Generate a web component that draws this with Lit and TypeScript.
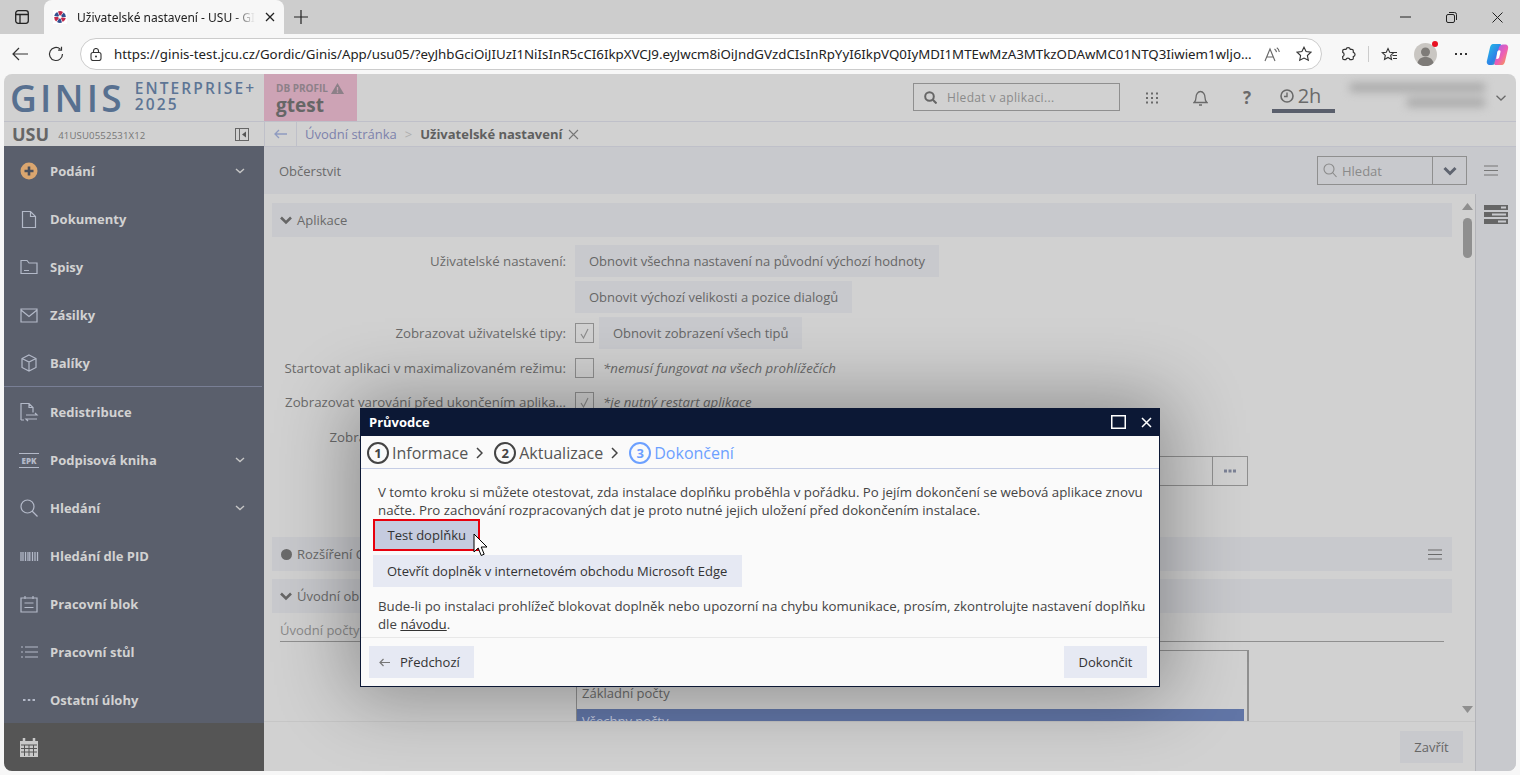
import { LitElement, html, css, svg } from "lit";
import { customElement } from "lit/decorators.js";

const s = (w: number, h: number, body: unknown, cls = "") =>
  html`<svg class=${cls} width=${w} height=${h} viewBox="0 0 ${w} ${h}" fill="none" stroke="currentColor" stroke-width="1.2">${body}</svg>`;

const chevSmall = s(10, 6, svg`<path d="M1 1l4 3.5L9 1" stroke-width="1.4"/>`);
const chevBold = s(14, 10, svg`<path d="M1.5 2l5.5 5.5L12.5 2" stroke-width="3"/>`);

const navIcons: Record<string, unknown> = {
  plus: s(18, 18, svg`<circle cx="9" cy="9" r="8.5" fill="#dba66f" stroke="none"/><path d="M9 4.5v9M4.5 9h9" stroke="#4a4f5c" stroke-width="2.6"/>`),
  doc: s(16, 18, svg`<path d="M1.5 1.5h8l5 5v11h-13zM9.5 1.5v5h5"/>`),
  folder: s(18, 16, svg`<path d="M1 1.5h6l2 2.5h8v10.5H1zM4 11.5h5"/>`),
  mail: s(18, 15, svg`<path d="M1 1h16v13H1zM1 2l8 6.5L17 2"/>`),
  box: s(18, 18, svg`<path d="M9 1l7 3.5v9L9 17l-7-3.500v-9zM2 4.500l7 3.500 7-3.500M9 8v9"/>`),
  redist: s(20, 20, svg`<path d="M2 18V1.500h8l4 4v5M10 1.500v4h4M2 18h3M7 13h11l-2-2M18 17H7l2 2"/>`),
  epk: html`<span class="epk">EPK</span>`,
  search: s(18, 18, svg`<circle cx="7.500" cy="7.500" r="6.500"/><path d="M12 12l5.500 5.500"/>`),
  pid: s(19, 9, svg`<path d="M1 0v9M3 0v9M5.500 0v9M8 0v9M9.800 0v9M12.500 0v9M15 0v9M17.500 0v9" stroke-width="1.300"/>`),
  cal: s(18, 18, svg`<path d="M1 3h16v14H1zM5 1v3M13 1v3M4.500 8h9M4.500 12.500h9"/>`),
  list: s(18, 12, svg`<path d="M5 1h13M5 6h13M5 11h13M1 1h2M1 6h2M1 11h2"/>`),
  dots: s(14, 4, svg`<path d="M1 2h2.500M5.800 2h2.500M10.500 2h2.500" stroke-width="2"/>`),
};

const nav: [string, string, boolean][] = [
  ["plus", "Podání", true],
  ["doc", "Dokumenty", false],
  ["folder", "Spisy", false],
  ["mail", "Zásilky", false],
  ["box", "Balíky", false],
];
const nav2: [string, string, boolean][] = [
  ["redist", "Redistribuce", false],
  ["epk", "Podpisová kniha", true],
  ["search", "Hledání", true],
  ["pid", "Hledání dle PID", false],
  ["cal", "Pracovní blok", false],
  ["list", "Pracovní stůl", false],
  ["dots", "Ostatní úlohy", false],
];

const URL_TEXT =
  "https://ginis-test.jcu.cz/Gordic/Ginis/App/usu05/?eyJhbGciOiJIUzI1NiIsInR5cCI6IkpXVCJ9.eyJwcm8iOiJndGVzdCIsInRpYyI6IkpVQ0IyMDI1MTEwMzA3MTkzODAwMC01NTQ3Iiwiem1wljo...";

const blades = [0, 60, 120, 180, 240, 300];

@customElement("app-root")
export class AppRoot extends LitElement {
  static styles = css`
    :host { display: block; width: 1520px; height: 775px; position: relative; overflow: hidden; background: #f7f7f7; font-family: "Open Sans", "Noto Sans", sans-serif; font-size: 13px; color: #6a6a6a; }
    * { box-sizing: border-box; }
    svg { display: block; flex: none; }

    .tabbar { height: 34px; background: #cdcdcd; display: flex; align-items: flex-end; color: #222; }
    .tabside { width: 44px; height: 34px; display: flex; align-items: center; justify-content: center; }
    .tab { width: 240px; height: 34px; background: #f7f7f7; border-radius: 8px 8px 0 0; display: flex; align-items: center; padding: 0 9px; font-family: "Noto Sans", sans-serif; font-size: 12px; color: #222; }
    .tab .title { flex: 1; margin-left: 10px; white-space: nowrap; overflow: hidden; -webkit-mask-image: linear-gradient(90deg, #000 88%, transparent); mask-image: linear-gradient(90deg, #000 88%, transparent); }
    .tab .x { margin: 0 0 0 10px; }
    .newtab { width: 34px; height: 34px; display: flex; align-items: center; justify-content: center; }
    .tabspace { flex: 1; }
    .wc { width: 46px; height: 34px; display: flex; align-items: center; justify-content: center; }

    .toolbar { height: 40px; background: #f7f7f7; display: flex; align-items: center; color: #333; padding-left: 2px; }
    .tbtn { width: 36px; height: 36px; display: flex; align-items: center; justify-content: center; flex: none; }
    .urlbar { width: 1242px; height: 32px; margin-left: 6px; background: #fff; border: 1px solid #ccc; border-radius: 16px; display: flex; align-items: center; padding-left: 9px; }
    .url { width: 1137px; margin-left: 12px; margin-right: 5px; flex: none; font-family: "Noto Sans", sans-serif; font-size: 13.3px; color: #222; white-space: nowrap; overflow: hidden; }
    .urlicon { width: 32px; display: flex; justify-content: center; flex: none; }
    .tbar-gap { width: 8px; flex: none; }
    .vline { width: 1px; height: 16px; background: #ccc; margin: 0 2px; flex: none; }
    .profile { position: relative; width: 36px; height: 36px; display: flex; align-items: center; justify-content: center; flex: none; }
    .reddot { position: absolute; left: 25px; top: 5px; width: 6px; height: 6px; border-radius: 50%; background: #e81123; }

    .frame { margin: 0 4px; height: 697px; border-radius: 8px; overflow: hidden; background: #d1d1d1; display: flex; flex-direction: column; }
    .head { height: 48px; flex: none; display: flex; border-bottom: 1px solid #bfc0c9; }
    .logo { width: 260px; flex: none; display: flex; align-items: center; padding: 0 0 0 6px; color: #577090; }
    .ginis { flex: none; font-size: 37px; line-height: 40px; font-weight: 600; letter-spacing: 3.2px; }
    .edition { flex: none; margin-left: 10px; margin-top: -3px; font-size: 15.5px; line-height: 16px; font-weight: 600; letter-spacing: 2.1px; color: #5d7595; white-space: nowrap; }
    .profilebox { width: 93px; flex: none; background: #cda3b5; padding: 7px 0 0 12px; }
    .profilelabel { display: flex; align-items: center; gap: 3px; font-size: 10px; line-height: 14px; font-weight: 700; color: #8c8088; }
    .gtest { font-size: 19px; line-height: 20px; font-weight: 700; color: #666; }
    .headspace { flex: 1; }
    .hsearch { width: 207px; height: 28px; margin-top: 9px; border: 1px solid #8f8f8f; display: flex; align-items: center; padding-left: 10px; gap: 10px; color: #8a8a8a; font-size: 12px; letter-spacing: .35px; }
    .hcell { height: 47px; display: flex; align-items: center; justify-content: center; color: #6a6a6a; flex: none; }
    .time { font-size: 20px; gap: 4px; border-bottom: 4px solid #5a5f6c; height: 39px; padding: 8px 6px 0 0; }
    .blur { width: 150px; padding: 9px 0 0 10px; display: flex; flex-direction: column; align-items: flex-end; gap: 6px; filter: blur(4px); }
    .blur i { display: block; height: 9px; background: #a9a9a9; }

    .columns { flex: 1; display: flex; min-height: 0; }
    .side { width: 260px; flex: none; display: flex; flex-direction: column; }
    .usu { height: 24px; flex: none; display: flex; align-items: center; padding: 0 15px 0 9px; }
    .usu b { font-size: 18px; font-weight: 700; color: #666; margin-left: -1px; }
    .usu small { font-size: 9.600px; margin-left: 9px; margin-top: 3px; flex: 1; color: #777; letter-spacing: .15px; }
    .nav { flex: 1; min-height: 0; background: #5a5f6c; overflow: hidden; padding-top: 1px; }
    .sep { height: 1px; background: #797f95; margin-right: 2px; margin-top: -1px; }
    .item { height: 48px; display: flex; align-items: center; padding: 0 19px 0 4px; color: #d2d2d2; font-weight: 700; font-size: 13px; }
    .item .ic { width: 42px; display: flex; justify-content: center; color: #b3b9c8; flex: none; }
    .item .lbl { flex: 1; }
    .item .ch { color: #c6c6c6; }
    .epk { display: block; width: 20px; border-top: 1px solid #b3b9c8; border-bottom: 1px solid #b3b9c8; font-size: 8px; line-height: 11px; text-align: center; font-weight: 800; color: #b3b9c8; padding: 1px 0; }
    .sidefoot { height: 48px; flex: none; background: #555; display: flex; align-items: center; padding-left: 16px; }

    .main { flex: 1; min-width: 0; display: flex; flex-direction: column; }
    .crumb { height: 25px; flex: none; display: flex; align-items: center; border-bottom: 1px solid #bfc0c9; border-left: 1px solid #bfc0c9; }
    .back { width: 32px; height: 24px; border-right: 1px solid #bfc0c9; display: flex; align-items: center; justify-content: center; color: #8f9bc0; }
    .crumb .c1 { margin-left: 8px; color: #7d82ac; }
    .crumb .sepc { margin: 0 8px; color: #aeaeae; }
    .crumb b { color: #5f5f5f; font-weight: 700; }
    .crumb .cx { margin-left: 6px; color: #777; }
    .tools { height: 47px; flex: none; background: #c8c9cd; display: flex; align-items: center; padding: 0 18px 0 15px; }
    .tools .ref { flex: 1; }
    .fsearch { width: 150px; height: 29px; border: 1px solid #8f8f8f; display: flex; align-items: center; color: #8a8a8a; }
    .fsearch .in { flex: 1; display: flex; align-items: center; gap: 5px; padding-left: 5px; height: 100%; }
    .fsearch .dd { width: 34px; height: 100%; border-left: 1px solid #8f8f8f; display: flex; align-items: center; justify-content: center; color: #5f6470; }
    .burger { margin-left: 17px; color: #777; }

    .body { flex: 1; min-height: 0; display: flex; }
    .left { flex: 1; min-width: 0; display: flex; flex-direction: column; }
    .scrollrow { flex: 1; min-height: 0; display: flex; overflow: hidden; }
    .content { flex: 1; min-width: 0; padding: 9px 8px 0; overflow: hidden; }
    .scroll { width: 15px; flex: none; display: flex; flex-direction: column; align-items: center; padding-top: 9px; color: #8f8f8f; }
    .thumb { width: 9px; height: 40px; border-radius: 5px; background: #8f8f8f; margin-top: 8px; }
    .scroll .sp { flex: 1; }
    .scroll .down { margin-bottom: 8px; }
    .bar { height: 34px; background: #c8c9cd; display: flex; align-items: center; padding: 0 10px 0 8px; gap: 5px; color: #6a6a6a; }
    .bar .t { flex: 1; white-space: nowrap; }
    .bar .ci { width: 12px; display: flex; justify-content: center; color: #666; }
    .dot { width: 11px; height: 11px; border-radius: 50%; background: #6a6a6a; flex: none; }
    .form { display: grid; grid-template-columns: 294px 1fr; column-gap: 9px; row-gap: 4px; padding-top: 8px; grid-template-rows: 32px 32px 32px 30px 30px 32px 30px; }
    .lab { display: flex; align-items: center; justify-content: flex-end; white-space: nowrap; overflow: hidden; font-size: 13.27px; }
    .ctl { display: flex; align-items: center; gap: 5px; min-width: 0; }
    .btn { height: 32px; display: inline-flex; align-items: center; padding: 0 14px; background: #c8c9cd; white-space: nowrap; color: #666; }
    .cb { width: 19px; height: 20px; border: 1px solid #8f8f8f; display: flex; align-items: center; justify-content: center; color: #8a8a8a; flex: none; }
    .note { font-style: italic; font-size: 13.27px; margin-left: 4px; color: #6a6a6a; }
    .inputrow { margin-top: -2px; height: 30px; border: 1px solid #8f8f8f; display: flex; justify-content: flex-end; width: 673px; }
    .inputrow .more { width: 35px; border-left: 1px solid #8f8f8f; display: flex; align-items: center; justify-content: center; color: #7c8296; }
    .mt1 { margin-top: 50px; }
    .mt2 { margin-top: 8px; }
    .field { margin: 8px 8px 0; height: 21px; border-bottom: 1px solid #8f8f8f; color: #8a8a8a; line-height: 18px; }
    .listbox { margin: 8px 0 0 304px; width: 673px; height: 90px; border: 1px solid #8f8f8f; border-right-width: 2px; border-bottom: 0; padding: 30px 3px 0 0; }
    .listbox div { height: 24px; line-height: 24px; padding-left: 5px; }
    .listbox .sel { background: #6175a6; color: #c6cde0; height: 26px; margin-top: 4px; }
    .foot { height: 50px; flex: none; border-top: 1px solid #c6c6c6; display: flex; align-items: center; justify-content: flex-end; padding-right: 12px; }
    .foot .btn { width: 63px; justify-content: center; padding: 0; }
    .rpanel { width: 41px; flex: none; background: #c8c9cd; border-left: 1px solid #b4b5ba; padding: 11px 0 0 8px; }

    .modal { position: absolute; left: 360px; top: 408px; width: 800px; height: 279px; background: #fafafa; border: 1px solid #0c1835; border-top: 0; box-shadow: 0 0 70px 10px rgba(0,0,0,.32); display: flex; flex-direction: column; color: #444; }
    .mtitle { height: 28px; flex: none; margin: 0 -1px; background: #0c1835; color: #fff; display: flex; align-items: center; padding: 0 0 0 9px; font-weight: 700; }
    .mtitle .t { flex: 1; }
    .mtitle .wb { width: 28px; display: flex; justify-content: center; }
    .steps { height: 33px; flex: none; border-bottom: 1px solid #c5cde5; display: flex; align-items: center; padding: 2px 0 0 6px; font-size: 16px; color: #555; }
    .num { width: 22px; height: 22px; border: 2px solid #444; border-radius: 50%; display: flex; align-items: center; justify-content: center; font-size: 13px; font-weight: 700; line-height: 1; margin-right: 3px; color: #444; }
    .chev { margin: 0 11px 0 8px; color: #444; }
    .cur { color: #6ca0ff; }
    .cur .num { border-color: #6ca0ff; color: #6ca0ff; }
    .stepgroup { display: flex; align-items: center; }
    .mbody { flex: 1; min-height: 0; padding: 14px 0 0 12px; line-height: 18px; }
    .mbody p { margin: 0 0 0 5px; white-space: nowrap; font-size: 13.27px; }
    .mbtn { display: flex; width: max-content; height: 32px; align-items: center; padding: 0 14px; background: #e6e9f3; color: #333; }
    .mbtn.hot { background: #c5cbdf; border: 2px solid #e8000d; padding: 0 12.500px; }
    .mbody .mbtn + .mbtn { margin-top: 4px; padding-right: 14.500px; }
    .mbody .after { margin-top: 10px; }
    .mbody a { color: #333; text-decoration: underline; }
    .mfoot { height: 49px; flex: none; border-top: 1px solid #e8e8e8; display: flex; justify-content: space-between; align-items: center; padding: 0 12px 0 8px; }
    .mfoot .arrow { margin-right: 10px; color: #777; }
    .mfoot .mbtn { padding: 0 14px 0 10px; }
    .mfoot .mbtn.r { padding: 0; width: 83px; justify-content: center; }
    .pointer { position: absolute; left: 473px; top: 533px; }
  `;

  render() {
    const item = ([k, l, c]: [string, string, boolean]) => html`
      <div class="item"><span class="ic">${navIcons[k]}</span><span class="lbl">${l}</span>${c ? html`<span class="ch">${chevSmall}</span>` : ""}</div>`;
    return html`
      <div class="tabbar">
        <div class="tabside">${s(14, 14, svg`<rect x=".7" y=".7" width="12.600" height="12.600" rx="2.500" stroke-width="1.300"/><path d="M1 4.500h12M5 4.500V13" stroke-width="1.300"/>`)}</div>
        <div class="tab">
          <svg width="14" height="14" viewBox="0 0 14 14"><rect width="14" height="14" fill="#fff"/>${blades.map((a, i) => svg`<path d="M7 7L5 1.500Q7.500 .5 10 2z" fill=${i % 2 ? "#33508f" : "#c22a4c"} transform="rotate(${a} 7 7)"/>`)}<circle cx="7" cy="7" r="1.800" fill="#fff"/></svg>
          <span class="title">Uživatelské nastavení - USU - GINIS</span>
          <span class="x">${s(10, 10, svg`<path d="M1 1l8 8M9 1l-8 8" stroke-width="1.300"/>`)}</span>
        </div>
        <div class="newtab">${s(14, 14, svg`<path d="M7 0v14M0 7h14" stroke-width="1.200"/>`)}</div>
        <div class="tabspace"></div>
        <div class="wc">${s(11, 2, svg`<path d="M0 1h11" stroke-width="1"/>`)}</div>
        <div class="wc">${s(11, 11, svg`<rect x=".5" y="2.500" width="8" height="8" rx="1.500" stroke-width="1"/><path d="M3 .5h5.500a2 2 0 0 1 2 2V8" stroke-width="1"/>`)}</div>
        <div class="wc">${s(11, 11, svg`<path d="M.5.5l10 10M10.500.5l-10 10" stroke-width="1"/>`)}</div>
      </div>

      <div class="toolbar">
        <div class="tbtn">${s(16, 14, svg`<path d="M16 7H1M7 1L1 7l6 6" stroke-width="1.200"/>`)}</div>
        <div class="tbtn">${s(16, 16, svg`<path d="M14.500 8A6.500 6.500 0 1 1 12.300 3.100M13.500 .8v3.400h-3.400" stroke-width="1.200"/>`)}</div>
        <div class="urlbar">
          <span>${s(12, 13, svg`<rect x="1" y="4.500" width="10" height="8" rx="2" stroke-width="1.100"/><path d="M3.500 4.500V3a2.500 2.500 0 0 1 5 0v1.500" stroke-width="1.100"/><circle cx="6" cy="8.500" r="1" fill="currentColor" stroke="none"/>`)}</span>
          <span class="url">${URL_TEXT}</span>
          <span class="urlicon">${s(17, 15, svg`<path d="M1 14L6 2l5 12M2.800 10h6.400M10.500 2c1.200.8 1.800 1.800 2 3.200M12.800 .8c1.500 1 2.300 2.500 2.500 4.200" stroke-width="1.100" stroke="#666"/>`)}</span>
          <span class="urlicon">${s(16, 16, svg`<path d="M8 1.200l2.100 4.400 4.800.6-3.500 3.300.9 4.800L8 12l-4.300 2.300.9-4.800L1.100 6.200l4.800-.6z" stroke-width="1.100"/>`)}</span>
        </div>
        <div class="tbar-gap"></div>
        <div class="tbtn">${s(16, 16, svg`<path d="M6 3.300a2.200 2.200 0 0 1 4.300 0h1.500a1.500 1.500 0 0 1 1.500 1.500v1.500a2.200 2.200 0 0 1 0 4.300v1.600a1.500 1.500 0 0 1-1.500 1.500H10a2.200 2.200 0 0 0-4.200 0H4.200a1.500 1.500 0 0 1-1.500-1.500v-1.700a2.200 2.200 0 0 0 0-4.100V4.800a1.500 1.500 0 0 1 1.500-1.500z" stroke-width="1.200"/>`)}</div>
        <div class="vline"></div>
        <div class="tbtn">${s(17, 15, svg`<path d="M7 1.500l1.700 3.700 4 .5-3 2.700.8 4L7 10.500l-3.500 1.900.8-4-3-2.700 4-.5zM11.500 8.500H16M12 11.500h4M11 5.500h5" stroke-width="1.100"/>`)}</div>
        <div class="profile">
          <svg width="23" height="23" viewBox="0 0 23 23"><circle cx="11.500" cy="11.500" r="11.500" fill="#c9c6c2"/><circle cx="11.500" cy="9" r="4.500" fill="#7e7b78"/><path d="M3.500 20c1-4.500 4.500-6 8-6s7 1.500 8 6a11.500 11.500 0 0 1-16 0z" fill="#7e7b78"/></svg>
          <span class="reddot"></span>
        </div>
        <div class="tbtn">${s(14, 4, svg`<path d="M1 2h2M6 2h2M11 2h2" stroke-width="2"/>`)}</div>
        <div class="tbtn">
          <svg width="23" height="23" viewBox="0 0 23 23">
            <defs>
              <linearGradient id="cp1" x1="0" y1="0" x2="1" y2="1"><stop offset="0" stop-color="#21c3e6"/><stop offset=".6" stop-color="#2f7fe8"/><stop offset="1" stop-color="#46d47f"/></linearGradient>
              <linearGradient id="cp2" x1="0" y1="0" x2="1" y2="1"><stop offset="0" stop-color="#9a5ff0"/><stop offset=".55" stop-color="#ee5fb4"/><stop offset="1" stop-color="#f9a83c"/></linearGradient>
            </defs>
            <path d="M7 1h7.500a2 2 0 0 1 .5 2.500L10 19c-.8 2-2 3-4 3H4c-2.500 0-3.800-2-3-4.500L4 4.500C4.600 2.300 5.500 1 7 1z" fill="url(#cp1)"/>
            <path d="M16 22H9a2 2 0 0 1-.5-2.500L13 4.500C13.800 2.500 15 1.500 17 1.500h2c2.500 0 3.800 2 3 4.500l-3 12.500c-.6 2.200-1.500 3.500-3 3.500z" fill="url(#cp2)"/>
            <path d="M12.500 7.500c1.500-.6 2.300.2 2 1.600l-1.300 5.500c-.4 1.300-1.800 1.800-3 1.200l1-6.500c.1-.8.500-1.500 1.300-1.800z" fill="#fff"/>
          </svg>
        </div>
      </div>

      <div class="frame">
        <div class="head">
          <div class="logo">
            <span class="ginis">GINIS</span>
            <span class="edition">ENTERPRISE+<br />2025</span>
          </div>
          <div class="profilebox">
            <div class="profilelabel">DB PROFIL ${s(13, 11, svg`<path d="M6.500 0L13 11H0z" fill="#8c8088" stroke="none"/><path d="M6.500 4v3.500M6.500 8.500v1.300" stroke="#cda3b5" stroke-width="1.300"/>`)}</div>
            <div class="gtest">gtest</div>
          </div>
          <div class="headspace"></div>
          <div class="hsearch">
            ${s(13, 13, svg`<circle cx="5.500" cy="5.500" r="4.300" stroke-width="2" stroke="#666"/><path d="M8.800 8.800L12.500 12.500" stroke-width="2" stroke="#666"/>`)}
            <span>Hledat v aplikaci...</span>
          </div>
          <div class="hcell" style="width:64px">${s(12, 12, svg`<path d="M0 1.500h2M5 1.500h2M10 1.500h2M0 6h2M5 6h2M10 6h2M0 10.500h2M5 10.500h2M10 10.500h2" stroke-width="1.800"/>`)}</div>
          <div class="hcell" style="width:32px">${s(15, 16, svg`<path d="M1 12.500c1.500-1 2-2 2-5 0-3 1.800-6 4.500-6s4.500 3 4.500 6c0 3 .5 4 2 5zM6 15h3" stroke-width="1.300"/>`)}</div>
          <div class="hcell" style="width:56px;padding-left:6px;font-size:17px;font-weight:700;">?</div>
          <div class="hcell time" style="width:63px">
            ${s(14, 14, svg`<circle cx="7" cy="7" r="6" stroke-width="1.600"/><path d="M7 3.500V7.500H4" stroke-width="1.400"/>`)}
            <span>2h</span>
          </div>
          <div class="blur"><i style="width:135px"></i><i style="width:78px"></i></div>
          <div class="hcell" style="width:31px">${s(10, 6, svg`<path d="M.5.8L5 5l4.500-4.200" stroke-width="1.300"/>`)}</div>
        </div>

        <div class="columns">
          <div class="side">
            <div class="usu">
              <b>USU</b><small>41USU0552531X12</small>
              ${s(14, 13, svg`<rect x=".5" y=".5" width="13" height="12" stroke-width="1" stroke="#666"/><path d="M4.500 1v11" stroke-width="1" stroke="#666"/><path d="M11 3.500v6L7 6.500z" fill="#555" stroke="none"/>`)}
            </div>
            <div class="nav">
              ${nav.map(item)}
              <div class="sep"></div>
              <div style="height:1px"></div>
              ${nav2.map(item)}
            </div>
            <div class="sidefoot">
              <svg width="18" height="19" viewBox="0 0 18 19"><path d="M0 3h18v16H0z" fill="#c9c9c9"/><path d="M4 0v5M14 0v5" stroke="#c9c9c9" stroke-width="2.500"/><path d="M1 7h16M1 10.500h16M1 14h16M4.500 7v11M9 7v11M13.500 7v11" stroke="#555" stroke-width="1"/></svg>
            </div>
          </div>

          <div class="main">
            <div class="crumb">
              <div class="back">${s(13, 10, svg`<path d="M13 5H1M5 1L1 5l4 4" stroke-width="1.300"/>`)}</div>
              <span class="c1">Úvodní stránka</span>
              <span class="sepc">&gt;</span>
              <b>Uživatelské nastavení</b>
              <span class="cx">${s(11, 11, svg`<path d="M1 1l9 9M10 1l-9 9" stroke-width="1.100"/>`)}</span>
            </div>
            <div class="tools">
              <span class="ref">Občerstvit</span>
              <div class="fsearch">
                <div class="in">${s(14, 15, svg`<circle cx="6" cy="6" r="5" stroke-width="1.100"/><path d="M9.500 9.500L13.500 14" stroke-width="1.100"/>`)}<span>Hledat</span></div>
                <div class="dd">${chevBold}</div>
              </div>
              <span class="burger">${s(14, 11, svg`<path d="M0 1h14M0 5.500h14M0 10h14" stroke-width="1.200"/>`)}</span>
            </div>
            <div class="body">
              <div class="left">
                <div class="scrollrow">
                  <div class="content">
                    <div class="bar"><span class="ci">${s(12, 9, svg`<path d="M1 1.500l5 5 5-5" stroke-width="2.600"/>`)}</span><span class="t">Aplikace</span></div>
                    <div class="form">
                      <div class="lab">Uživatelské nastavení:</div>
                      <div class="ctl"><span class="btn">Obnovit všechna nastavení na původní výchozí hodnoty</span></div>
                      <div class="lab"></div>
                      <div class="ctl"><span class="btn">Obnovit výchozí velikosti a pozice dialogů</span></div>
                      <div class="lab">Zobrazovat uživatelské tipy:</div>
                      <div class="ctl"><span class="cb">${s(11, 11, svg`<path d="M2 6l2.500 4L9 1" stroke-width="1.100"/>`)}</span><span class="btn">Obnovit zobrazení všech tipů</span></div>
                      <div class="lab">Startovat aplikaci v maximalizovaném režimu:</div>
                      <div class="ctl"><span class="cb"></span><span class="note">*nemusí fungovat na všech prohlížečích</span></div>
                      <div class="lab">Zobrazovat varování před ukončením aplika...</div>
                      <div class="ctl"><span class="cb">${s(11, 11, svg`<path d="M2 6l2.500 4L9 1" stroke-width="1.100"/>`)}</span><span class="note">*je nutný restart aplikace</span></div>
                      <div class="lab">Zobrazovat upozornění na nové verze:</div>
                      <div class="ctl"></div>
                      <div class="lab"></div>
                      <div class="ctl"><div class="inputrow"><span class="more">${s(12, 4, svg`<path d="M0 2h3M4.500 2h3M9 2h3" stroke-width="3"/>`)}</span></div></div>
                    </div>
                    <div class="bar mt1"><span class="ci"><span class="dot"></span></span><span class="t">Rozšíření Chrome</span>${s(14, 11, svg`<path d="M0 1h14M0 5.500h14M0 10h14" stroke-width="1.200"/>`)}</div>
                    <div class="bar mt2"><span class="ci">${s(12, 9, svg`<path d="M1 1.500l5 5 5-5" stroke-width="2.600"/>`)}</span><span class="t">Úvodní obrazovka</span></div>
                    <div class="field">Úvodní počty</div>
                    <div class="listbox"><div>Základní počty</div><div class="sel">Všechny počty</div></div>
                  </div>
                  <div class="scroll">
                    ${s(11, 7, svg`<path d="M5.500 0L11 7H0z" fill="currentColor" stroke="none"/>`)}
                    <div class="thumb"></div>
                    <div class="sp"></div>
                    <span class="down">${s(11, 7, svg`<path d="M5.500 7L11 0H0z" fill="currentColor" stroke="none"/>`)}</span>
                  </div>
                </div>
                <div class="foot"><span class="btn">Zavřít</span></div>
              </div>
              <div class="rpanel">
                <svg width="24" height="19" viewBox="0 0 24 19"><path d="M0 0h24v5H0zM0 7h24v5H0zM0 14h24v5H0z" fill="#666"/><path d="M17 1.500h5v2h-5zM8 8.500h14v2H8zM14 15.500h8v2h-8z" fill="#c8c9cd"/></svg>
              </div>
            </div>
          </div>
        </div>
      </div>

      <div class="modal">
        <div class="mtitle">
          <span class="t">Průvodce</span>
          <span class="wb">${s(15, 14, svg`<rect x=".75" y=".75" width="13.500" height="12.500" stroke-width="1.500" stroke="#fff"/>`)}</span>
          <span class="wb">${s(11, 11, svg`<path d="M1 1l9 9M10 1l-9 9" stroke-width="1.500" stroke="#fff"/>`)}</span>
        </div>
        <div class="steps">
          <span class="stepgroup"><span class="num">1</span>Informace</span>
          <span class="chev">${s(7, 12, svg`<path d="M1 1l5 5-5 5" stroke-width="1.500"/>`)}</span>
          <span class="stepgroup"><span class="num">2</span>Aktualizace</span>
          <span class="chev">${s(7, 12, svg`<path d="M1 1l5 5-5 5" stroke-width="1.500"/>`)}</span>
          <span class="stepgroup cur"><span class="num">3</span>Dokončení</span>
        </div>
        <div class="mbody">
          <p>V tomto kroku si můžete otestovat, zda instalace doplňku proběhla v pořádku. Po jejím dokončení se webová aplikace znovu</p>
          <p>načte. Pro zachování rozpracovaných dat je proto nutné jejich uložení před dokončením instalace.</p>
          <span class="mbtn hot">Test doplňku</span>
          <span class="mbtn">Otevřít doplněk v internetovém obchodu Microsoft Edge</span>
          <p class="after">Bude-li po instalaci prohlížeč blokovat doplněk nebo upozorní na chybu komunikace, prosím, zkontrolujte nastavení doplňku</p>
          <p>dle <a>návodu</a>.</p>
        </div>
        <div class="mfoot">
          <span class="mbtn"><span class="arrow">${s(11, 9, svg`<path d="M11 4.500H1M4.500 1L1 4.500 4.500 8" stroke-width="1.200"/>`)}</span>Předchozí</span>
          <span class="mbtn r">Dokončit</span>
        </div>
      </div>

      <svg class="pointer" width="16" height="25" viewBox="0 0 16 25"><path d="M1 1v18l4.200-4 3 7.500 3-1.300-3-7.200H14z" fill="#fff" stroke="#000" stroke-width="1" stroke-linejoin="round"/></svg>
    `;
  }
}
